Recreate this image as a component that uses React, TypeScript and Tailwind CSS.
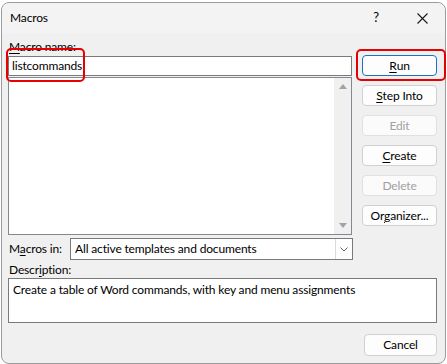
import React from 'react';

const font = { fontFamily: 'Lato, "Segoe UI", Arial, sans-serif' };

const Btn: React.FC<{ label: React.ReactNode; disabled?: boolean; primary?: boolean }> = ({ label, disabled, primary }) => (
  <div
    className={`h-[21px] w-[75px] flex items-center justify-center rounded-[4px] border text-[12px] leading-none ${
      disabled
        ? 'bg-[#fbfbfb] border-[#e0e0e0] text-[#a0a0a0]'
        : primary
        ? 'bg-[#fdfdfd] border-[#1f6fc5] text-black'
        : 'bg-[#fdfdfd] border-[#d0d0d0] text-black'
    }`}
  >
    {label}
  </div>
);

const U: React.FC<{ children: React.ReactNode }> = ({ children }) => <span className="underline underline-offset-2">{children}</span>;

const App: React.FC = () => {
  return (
    <div className="w-[447px] h-[364px] bg-white overflow-hidden relative tracking-[-0.15px]" style={font}>
      {/* dialog window */}
      <div className="ml-[1px] mt-[2px] w-[445px] h-[362px] bg-[#f0f0f0] border border-[#9c9c9c] rounded-t-[8px] rounded-b-[8px] flex flex-col">
        {/* title bar */}
        <div className="h-[30px] flex items-center pl-[8px] bg-[#f3f3f3] rounded-t-[8px] text-[12px] text-black">
          <span className="flex-1">Macros</span>
          <span className="w-[46px] text-center text-[13px]">?</span>
          <span className="w-[46px] flex justify-center">
            <svg width="11" height="11" viewBox="0 0 11 11">
              <path d="M0.5 0.5 L10.5 10.5 M10.5 0.5 L0.5 10.5" stroke="#1a1a1a" strokeWidth="1.1" />
            </svg>
          </span>
        </div>

        <div className="pl-[6px] pr-[8px] text-[12px] text-black">
          <div className="flex gap-[10px]">
            {/* left column */}
            <div className="w-[345px] flex flex-col">
              <div className="h-[16px] mt-[6px] mb-[1px] leading-[16px] pl-[1px]">
                <U>M</U>acro name:
              </div>
              <div className="h-[20px] bg-white border border-[#7a7a7a] flex items-center pl-[3px] leading-none">
                listcommands
              </div>
              <div className="mt-[1px] h-[158px] bg-white border border-[#828790] flex">
                <div className="flex-1" />
                <div className="w-[17px] bg-[#f0f0f0] flex flex-col items-center justify-between py-[6px]">
                  <svg width="8" height="5" viewBox="0 0 8 5">
                    <path d="M0 5 L4 0 L8 5 Z" fill="#a3a3a3" />
                  </svg>
                  <svg width="8" height="5" viewBox="0 0 8 5">
                    <path d="M0 0 L4 5 L8 0 Z" fill="#a3a3a3" />
                  </svg>
                </div>
              </div>
            </div>
            {/* buttons */}
            <div className="flex flex-col gap-[9px] pt-[22px]">
              <Btn primary label={<><U>R</U>un</>} />
              <Btn label={<><U>S</U>tep Into</>} />
              <Btn disabled label="Edit" />
              <Btn label={<><U>C</U>reate</>} />
              <Btn disabled label="Delete" />
              <Btn label={<>Or<U>g</U>anizer...</>} />
            </div>
          </div>

          {/* macros in */}
          <div className="flex items-center mt-[3px] w-[345px]">
            <span className="w-[62px] pl-[1px]">
              M<U>a</U>cros in:
            </span>
            <div className="flex-1 h-[22px] bg-white border border-[#7a7a7a] flex items-center">
              <span className="flex-1 pl-[4px] leading-none">All active templates and documents</span>
              <div className="w-[17px] h-full border-l border-[#d9d9d9] flex items-center justify-center">
                <svg width="8" height="5" viewBox="0 0 8 5">
                  <path d="M0.5 0.5 L4 4 L7.5 0.5" stroke="#606060" strokeWidth="1" fill="none" />
                </svg>
              </div>
            </div>
          </div>

          {/* description */}
          <div className="mt-[2px] h-[16px] leading-[16px] pl-[1px]">
            Descr<U>i</U>ption:
          </div>
          <div className="h-[45px] bg-white border border-[#7a7a7a] pl-[4px] pt-[3px] leading-[16px]">
            Create a table of Word commands, with key and menu assignments
          </div>

          <div className="flex justify-end mt-[11px]">
            <div className="h-[22px] w-[73px] flex items-center justify-center rounded-[4px] border border-[#d0d0d0] bg-[#fdfdfd]">
              Cancel
            </div>
          </div>
        </div>
      </div>

      {/* red annotation boxes */}
      <div className="absolute left-[6px] top-[48px] w-[79px] h-[34px] border-2 border-[#e60000] rounded-[5px]" />
      <div className="absolute left-[356px] top-[49px] w-[90px] h-[32px] border-2 border-[#e60000] rounded-[5px]" />
    </div>
  );
};

export default App;
